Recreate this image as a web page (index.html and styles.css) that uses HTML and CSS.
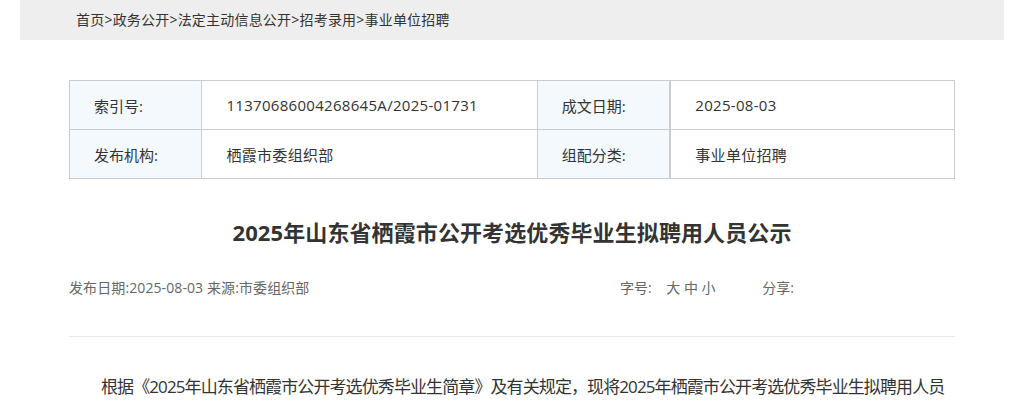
FILE: index.html
```html
<!DOCTYPE html>
<html lang="zh-CN">
<head>
    <meta charset="UTF-8">
    <meta name="viewport" content="width=device-width, initial-scale=1.0">
    <title>2025年山东省栖霞市公开考选优秀毕业生拟聘用人员公示</title>
    <link rel="stylesheet" href="styles.css">
</head>
<body>
    <div class="crumb">
        <a href="#">首页</a>&gt;<a href="#">政务公开</a>&gt;<a href="#">法定主动信息公开</a>&gt;<a href="#">招考录用</a>&gt;<a href="#">事业单位招聘</a>
    </div>

    <div class="main">
        <table class="info">
            <tr>
                <td class="label">索引号:</td>
                <td class="value">11370686004268645A/2025-01731</td>
                <td class="label">成文日期:</td>
                <td class="value last">2025-08-03</td>
            </tr>
            <tr>
                <td class="label">发布机构:</td>
                <td class="value">栖霞市委组织部</td>
                <td class="label">组配分类:</td>
                <td class="value last">事业单位招聘</td>
            </tr>
        </table>

        <h1 class="title">2025年山东省栖霞市公开考选优秀毕业生拟聘用人员公示</h1>

        <div class="meta">
            <div class="source">发布日期:2025-08-03 来源:市委组织部</div>
            <div class="tools">
                <span>字号:</span>
                <span class="sizes"><a href="#">大</a> <a href="#">中</a> <a href="#">小</a></span>
                <span class="share">分享:</span>
            </div>
        </div>

        <div class="content">
            <p>根据《2025年山东省栖霞市公开考选优秀毕业生简章》及有关规定，现将2025年栖霞市公开考选优秀毕业生拟聘用人员名单予以公示，公示期为5个工作日。</p>
        </div>
    </div>
</body>
</html>
```

FILE: styles.css
```css
body {
    margin: 0;
    font-family: "Open Sans", "Noto Sans CJK SC", sans-serif;
    color: #333;
    background: #fff;
}

a {
    color: #333;
    text-decoration: none;
}

.crumb {
    width: 928px;
    margin: 0 auto;
    height: 40px;
    line-height: 40px;
    padding-left: 56px;
    background: #eeeeee;
    font-size: 14px;
    letter-spacing: 0.2px;
}

.main {
    width: 886px;
    margin: 0 auto;
}

.info {
    width: 886px;
    margin-top: 40px;
    border-collapse: collapse;
    font-size: 15px;
}

.info td {
    height: 48px;
    border: 1px solid #cccccc;
    padding: 0 0 0 24px;
}

.info .label {
    width: 108px;
    background: #f3f9fd;
}

.info .value {
    width: 311px;
    letter-spacing: 0.3px;
}

.info .last {
    width: 260px;
    border-left: 2px solid #cccccc;
}

.title {
    margin: 38px 0 0;
    font-size: 22px;
    line-height: 30px;
    font-weight: bold;
    text-align: center;
    letter-spacing: 0.1px;
}

.meta {
    display: flex;
    margin-top: 31px;
    padding-bottom: 38px;
    border-bottom: 1px solid #eaeaea;
    font-size: 14px;
    line-height: 20px;
    color: #666;
}

.source {
    flex: 1;
    letter-spacing: 0.1px;
}

.tools {
    width: 335px;
}

.sizes {
    margin-left: 11px;
}

.sizes a {
    color: #666;
}

.share {
    margin-left: 43px;
}

.content {
    padding-top: 33px;
    font-size: 17px;
    line-height: 34px;
    letter-spacing: -0.9px;
}

.content p {
    margin: 0;
    text-indent: 32px;
}
```
